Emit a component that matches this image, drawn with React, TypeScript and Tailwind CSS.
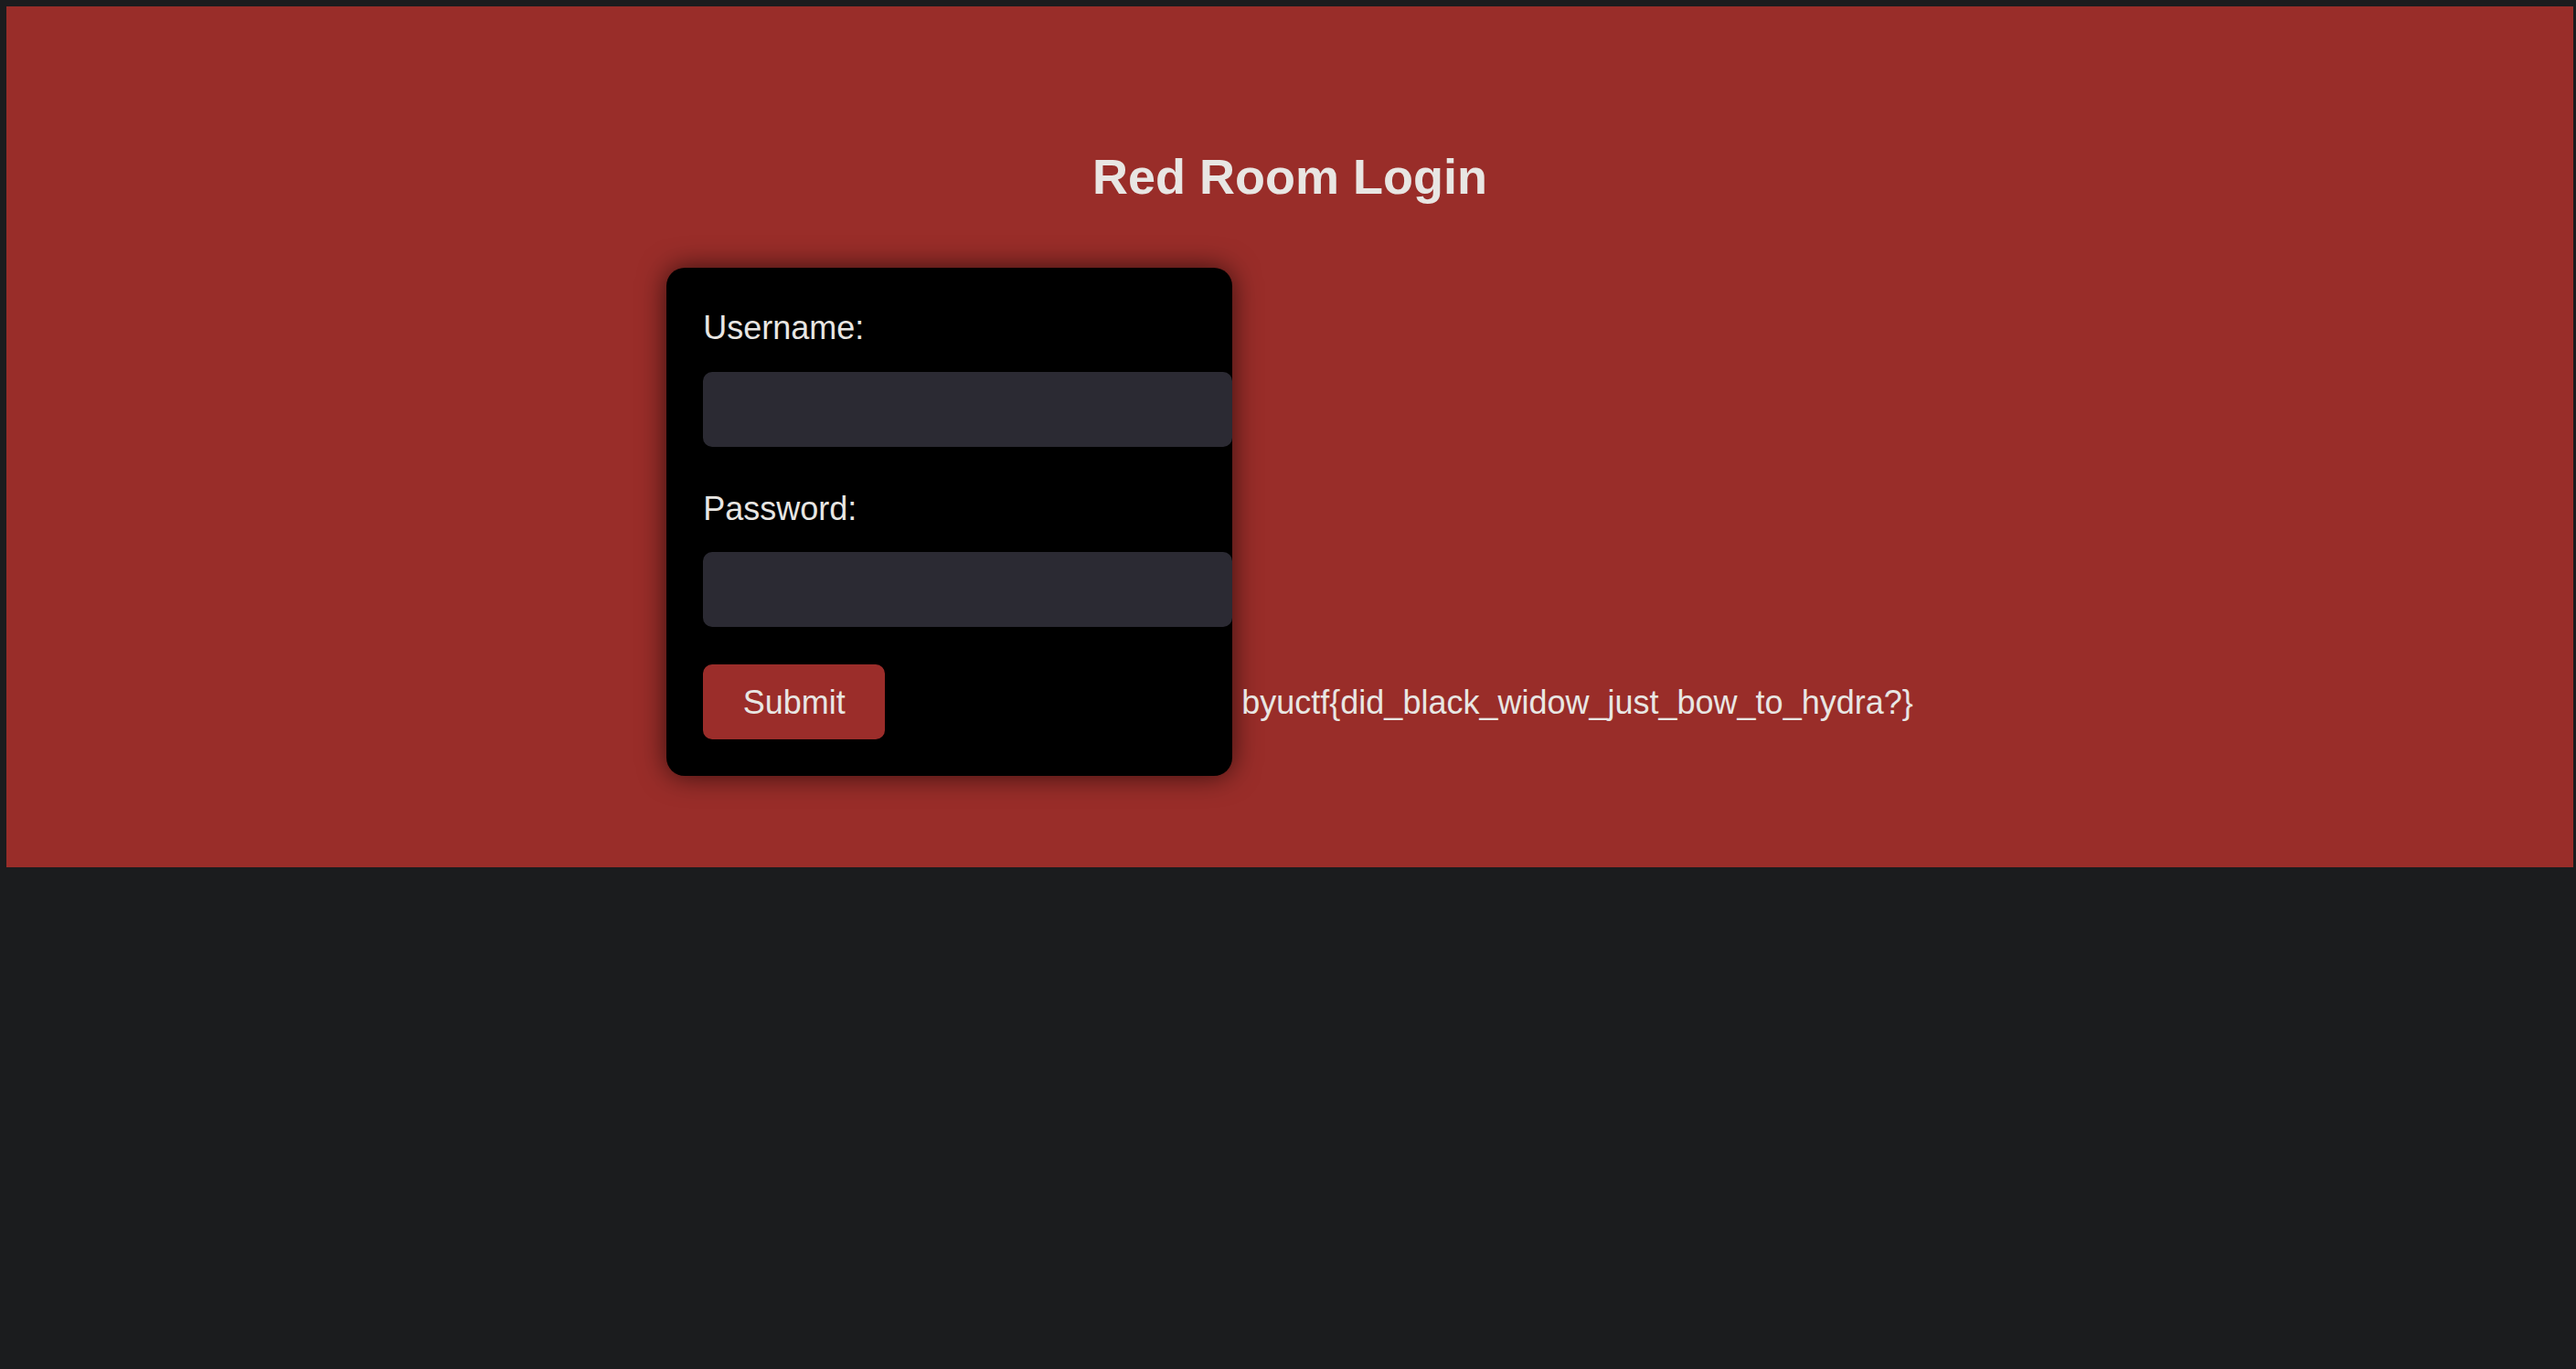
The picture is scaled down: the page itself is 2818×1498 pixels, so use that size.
import React from "react";

const RedRoomLogin = () => {
  return (
    <div className="min-h-screen w-full bg-[#1b1c1e] pt-[7px] pl-[7px] font-['Liberation_Sans',Arial,sans-serif] text-[#e8e6e3]">
      <div className="w-[2808px] h-[942px] bg-[#992d29] pt-[155px]">
        {/* Title */}
        <h1 className="text-center text-[54px] leading-[62px] font-bold">Red Room Login</h1>

        {/* Form + flag, laid out inline so the flag sits on the button's baseline */}
        <div className="mt-[69px] text-center text-[36px] leading-[41px]">
          <form
            className="inline-block align-baseline w-[619px] rounded-[20px] bg-black pl-[40px] pt-[45px] pb-[40px] text-left shadow-[0_0_30px_rgba(0,0,0,0.65)]"
            onSubmit={(e) => e.preventDefault()}
          >
            <label className="block text-[36px] leading-[41px]">Username:</label>
            <input
              type="text"
              className="mt-[28px] block w-[579px] h-[82px] rounded-[10px] bg-[#2b2a33] outline-none"
            />
            <label className="mt-[47px] block text-[36px] leading-[41px]">Password:</label>
            <input
              type="password"
              className="mt-[27px] block w-[579px] h-[82px] rounded-[10px] bg-[#2b2a33] outline-none"
            />
            <button
              type="submit"
              className="mt-[41px] w-[199px] h-[82px] rounded-[10px] bg-[#9b2d2a] text-[36px] leading-[41px] text-[#e8e6e3]"
            >
              Submit
            </button>
          </form>{" "}
          <span>byuctf{"{"}did_black_widow_just_bow_to_hydra?{"}"}</span>
        </div>
      </div>
    </div>
  );
};

export default function App() {
  return <RedRoomLogin />;
}
